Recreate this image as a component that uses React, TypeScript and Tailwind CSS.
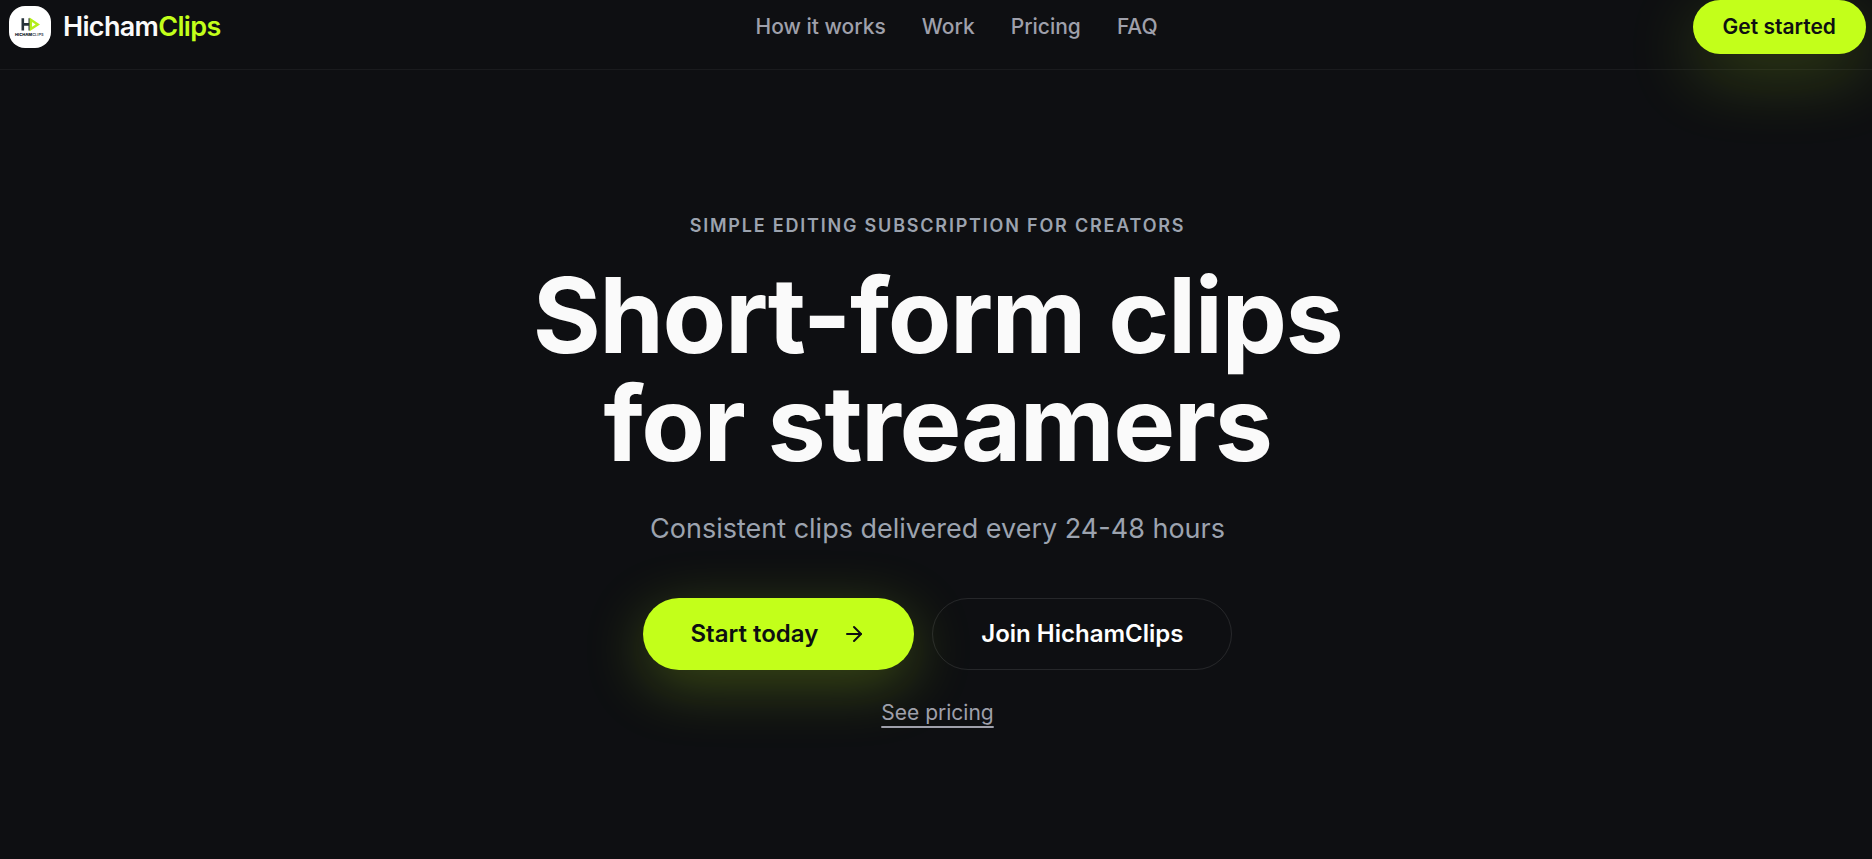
import { ArrowRight } from 'lucide-react';

const navLinks = [
  { label: 'How it works', href: '#how-it-works' },
  { label: 'Work', href: '#work' },
  { label: 'Pricing', href: '#pricing' },
  { label: 'FAQ', href: '#faq' },
];

function Logo() {
  return (
    <svg viewBox="0 0 42 42" className="size-[42px] rounded-2xl bg-white" aria-hidden="true">
      <path d="M13.8 12.3v12.2M13.8 18.4h7" stroke="#26323a" strokeWidth="2.6" fill="none" />
      <path d="M20.2 12.3v12.2" stroke="#26323a" strokeWidth="1.4" fill="none" />
      <path d="M21.8 13.8v9.2l7-4.6z" stroke="#b4ee1c" strokeWidth="2.4" fill="none" />
      <text x="6" y="30" fontSize="4" fontFamily="Inter, sans-serif" textAnchor="start">
        <tspan fontWeight="900" fill="#26323a">HICHAM</tspan>
        <tspan fontWeight="500" fill="#26323a">CLIPS</tspan>
      </text>
    </svg>
  );
}

function Header() {
  return (
    <header className="flex items-start justify-between border-b border-white/5 pb-[15px] pl-[9px] pr-[6px]">
      <a href="#top" className="flex h-[54px] items-center gap-3">
        <Logo />
        <span className="text-[27px] font-semibold tracking-tight text-[#fafafa]">
          Hicham<span className="text-[#c3ff1a]">Clips</span>
        </span>
      </a>

      <nav className="flex h-[54px] items-center gap-9 text-[21px] font-medium text-[#9fa0ab]">
        {navLinks.map((link) => (
          <a key={link.href} href={link.href} className="transition-colors hover:text-white">
            {link.label}
          </a>
        ))}
      </nav>

      <button
        type="button"
        className="h-[54px] rounded-full bg-[#c3ff1a] px-[30px] text-[21px] font-semibold text-[#0e0f12] shadow-[0_20px_70px_rgba(195,255,26,0.22)]"
      >
        Get started
      </button>
    </header>
  );
}

function Hero() {
  return (
    <section className="flex flex-col items-center pl-[27px] pr-6 pt-[142px] text-center">
      <p className="text-[18px] font-semibold uppercase leading-[27px] tracking-widest text-[#9ca3af]">
        Simple editing subscription for creators
      </p>
      <h1 className="mt-[22px] text-[104px] font-bold leading-[108px] tracking-[-0.014em] text-[#fafafa]">
        Short-form clips
        <br />
        for streamers
      </h1>
      <p className="mt-[31px] text-[27px] leading-[42px] text-[#9ca3af]">
        Consistent clips delivered every 24-48 hours
      </p>

      <div className="mt-[48px] flex flex-wrap justify-center gap-[18px]">
        <button
          type="button"
          className="flex h-[72px] items-center gap-6 rounded-full bg-[#c3ff1a] px-12 text-[24px] font-semibold text-[#0e0f12] shadow-[0_15px_60px_rgba(195,255,26,0.25)]"
        >
          Start today
          <ArrowRight className="size-6" />
        </button>
        <button
          type="button"
          className="h-[72px] rounded-full border border-white/10 px-12 text-[24px] font-semibold text-white"
        >
          Join HichamClips
        </button>
      </div>

      <a
        href="#pricing"
        className="mt-[28px] text-[21px] leading-[30px] text-[#9fa0ab] underline decoration-2 underline-offset-6"
      >
        See pricing
      </a>
    </section>
  );
}

export default function App() {
  return (
    <div id="top" className="min-h-screen overflow-hidden bg-[#0e0f12] font-[Inter,sans-serif]">
      <Header />
      <main>
        <Hero />
      </main>
    </div>
  );
}
